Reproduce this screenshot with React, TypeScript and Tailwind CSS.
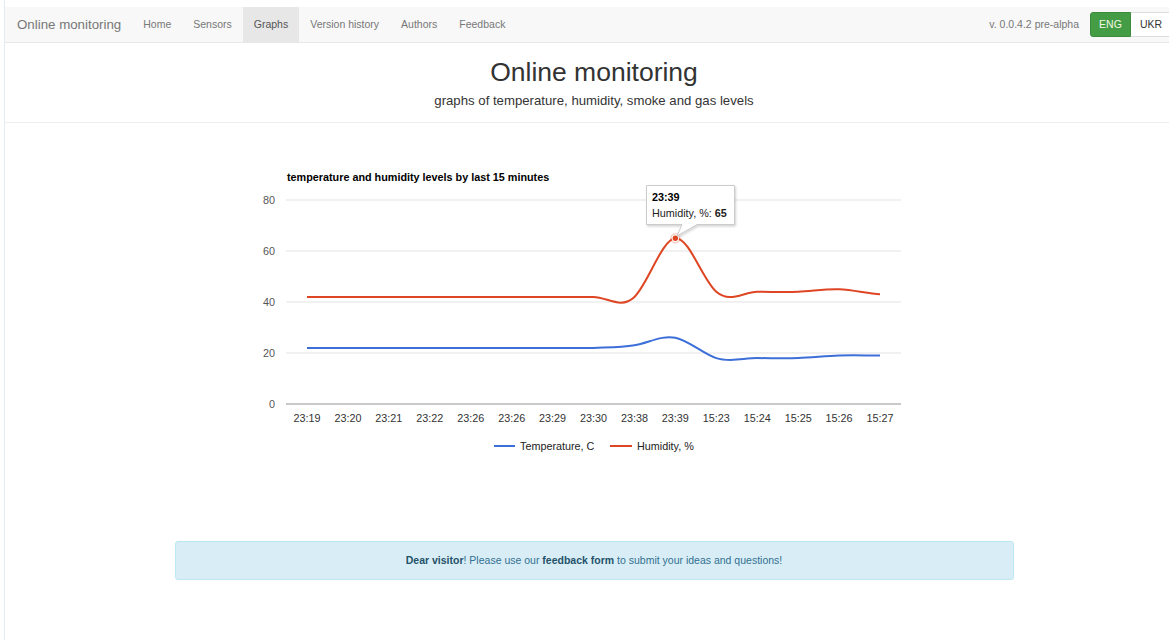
import React from "react";

const labels = [
  "23:19", "23:20", "23:21", "23:22", "23:26", "23:26", "23:29", "23:30",
  "23:38", "23:39", "15:23", "15:24", "15:25", "15:26", "15:27",
];
const temperature = [22, 22, 22, 22, 22, 22, 22, 22, 23, 26, 18, 18, 18, 19, 19];
const humidity = [42, 42, 42, 42, 42, 42, 42, 42, 42, 65, 44, 44, 44, 45, 43];

// plot geometry (svg coordinates)
const X0 = 133;
const STEP = 40.93;
const BASE = 254;
const PX_PER_UNIT = 2.55;
const PLOT_LEFT = 112;
const PLOT_RIGHT = 727;
const SMOOTH_Y = 0.22;

const yOf = (v: number) => BASE - v * PX_PER_UNIT;

// cubic spline through the points, handles a third of a step apart on x
function smoothPath(values: number[]): string {
  const pts = values.map((v, i) => [X0 + i * STEP, yOf(v)]);
  let d = `M${pts[0][0]},${pts[0][1]}`;
  for (let i = 0; i < pts.length - 1; i++) {
    const p0 = pts[i - 1] ?? pts[i];
    const p1 = pts[i];
    const p2 = pts[i + 1];
    const p3 = pts[i + 2] ?? pts[i + 1];
    const c1x = p1[0] + STEP / 3;
    const c1y = p1[1] + (p2[1] - p0[1]) * SMOOTH_Y;
    const c2x = p2[0] - STEP / 3;
    const c2y = p2[1] - (p3[1] - p1[1]) * SMOOTH_Y;
    d += ` C${c1x.toFixed(2)},${c1y.toFixed(2)} ${c2x.toFixed(2)},${c2y.toFixed(2)} ${p2[0].toFixed(2)},${p2[1].toFixed(2)}`;
  }
  return d;
}

const BLUE = "#3d6fd8";
const RED = "#de4523";

function Chart() {
  const peakX = X0 + 9 * STEP;
  const peakY = yOf(65);
  return (
    <svg width={840} height={320} viewBox="0 0 840 320" fontFamily="'Liberation Sans', Arial, sans-serif">
      <defs>
        <filter id="tipShadow" x="-20%" y="-20%" width="140%" height="160%">
          <feDropShadow dx="1" dy="1.5" stdDeviation="1.2" floodColor="#000" floodOpacity="0.18" />
        </filter>
      </defs>

      <text x={PLOT_LEFT + 1} y={31} fontSize={10.8} fontWeight="bold" fill="#000">
        temperature and humidity levels by last 15 minutes
      </text>

      {[80, 60, 40, 20].map((v) => (
        <line key={v} x1={PLOT_LEFT} x2={PLOT_RIGHT} y1={yOf(v)} y2={yOf(v)} stroke="#e3e3e3" strokeWidth={1} />
      ))}
      <line x1={PLOT_LEFT} x2={PLOT_RIGHT} y1={BASE} y2={BASE} stroke="#c9c9c9" strokeWidth={2} />

      {[80, 60, 40, 20, 0].map((v) => (
        <text key={v} x={101} y={yOf(v) + 4} fontSize={10.8} fill="#555" textAnchor="end">
          {v}
        </text>
      ))}

      {labels.map((l, i) => (
        <text key={i} x={X0 + i * STEP} y={272} fontSize={10.8} fill="#333" textAnchor="middle">
          {l}
        </text>
      ))}

      <path d={smoothPath(temperature)} fill="none" stroke={BLUE} strokeWidth={2} />
      <path d={smoothPath(humidity)} fill="none" stroke={RED} strokeWidth={2} />

      {/* focused point */}
      <circle cx={peakX} cy={peakY} r={5.2} fill={RED} fillOpacity={0.25} />
      <circle cx={peakX} cy={peakY} r={3.7} fill="#fff" />
      <circle cx={peakX} cy={peakY} r={2.7} fill={RED} />

      {/* tooltip */}
      <path
        d="M472.5,35.5 H560.5 V74.5 H523 L503,86 L508,74.5 H472.5 Z"
        fill="#fff"
        stroke="#cccccc"
        strokeWidth={1}
        filter="url(#tipShadow)"
      />
      <text x={478} y={51} fontSize={10.8} fontWeight="bold" fill="#000">
        23:39
      </text>
      <text x={478} y={67} fontSize={10.8} fill="#222">
        Humidity, %: <tspan fontWeight="bold">65</tspan>
      </text>

      {/* legend */}
      <line x1={320} x2={341} y1={296} y2={296} stroke={BLUE} strokeWidth={2} />
      <text x={346} y={300} fontSize={10.8} fill="#222">
        Temperature, C
      </text>
      <line x1={436} x2={458} y1={296} y2={296} stroke={RED} strokeWidth={2} />
      <text x={463} y={300} fontSize={10.8} fill="#222">
        Humidity, %
      </text>
    </svg>
  );
}

const navLinks = ["Home", "Sensors", "Graphs", "Version history", "Authors", "Feedback"];

export default function App() {
  return (
    <div className="w-[1169px] min-h-[640px] overflow-hidden bg-white pl-[4px] font-['Liberation_Sans',Arial,sans-serif]">
      <div className="w-[1179px] min-h-[640px] border-l border-[#e4ebf6] pt-[7px]">
        {/* navbar */}
        <nav className="flex h-[36px] items-stretch justify-between border-b border-[#e7e7e7] bg-[#f8f8f8] pl-px">
          <div className="flex items-stretch">
            <div className="flex items-center px-[11px] text-[13.3px] text-[#777]">Online monitoring</div>
            {navLinks.map((l) => (
              <div
                key={l}
                className={
                  l === "Graphs"
                    ? "flex items-center bg-[#e7e7e7] px-[11px] text-[10.5px] text-[#555]"
                    : "flex items-center px-[11px] text-[10.5px] text-[#777]"
                }
              >
                {l}
              </div>
            ))}
          </div>
          <div className="flex items-center pr-[11px]">
            <span className="mr-[11px] text-[10.5px] text-[#777]">v. 0.0.4.2 pre-alpha</span>
            <div className="flex h-[25px]">
              <div className="flex w-[41px] items-center justify-center rounded-l-[3px] border border-[#3d8b3d] bg-[#449d44] text-[10.5px] text-[#f3f7e6]">
                ENG
              </div>
              <div className="flex w-[41px] items-center justify-center rounded-r-[3px] border border-l-0 border-[#ddd] bg-white text-[10.5px] text-[#333]">
                UKR
              </div>
            </div>
          </div>
        </nav>

        {/* page header */}
        <header className="h-[80px] border-b border-[#eeeeee] pt-[15px] text-center text-[#333]">
          <h1 className="text-[26.5px] leading-[29px]">Online monitoring</h1>
          <p className="mt-[5px] text-[13.2px] leading-[18px]">graphs of temperature, humidity, smoke and gas levels</p>
        </header>

        <div className="mx-auto mt-[27px] w-[840px]">
          <Chart />
        </div>

        <div className="mx-auto mt-[71px] flex h-[39px] w-[839px] items-center justify-center rounded-[3px] border border-[#bce8f1] bg-[#d9edf7] text-[10.5px] text-[#31708f]">
          <span>
            <b className="text-[#245269]">Dear visitor</b>! Please use our{" "}
            <b className="text-[#245269]">feedback form</b> to submit your ideas and questions!
          </span>
        </div>
      </div>
    </div>
  );
}
